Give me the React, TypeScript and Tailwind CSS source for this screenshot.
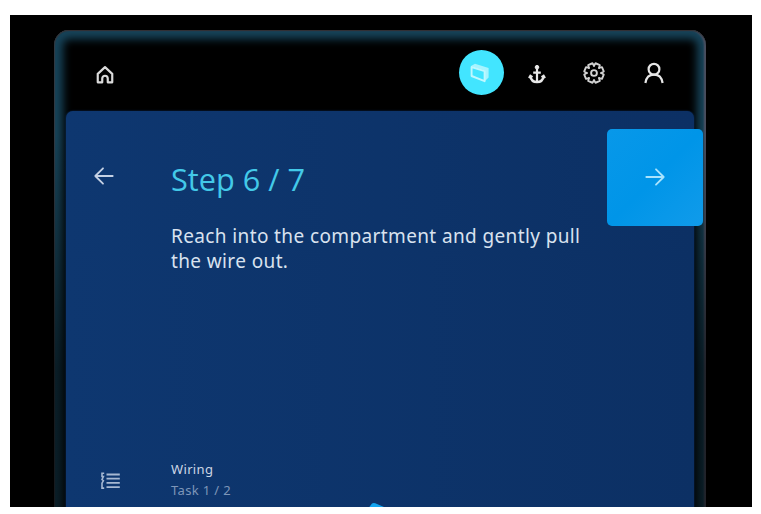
import type { ReactNode } from "react";

function Glyph({ className, children }: { className: string; children: ReactNode }) {
  return (
    <svg
      viewBox="0 0 24 24"
      fill="none"
      stroke="currentColor"
      strokeLinejoin="round"
      className={className}
    >
      {children}
    </svg>
  );
}

function HomeIcon() {
  return (
    <Glyph className="h-[20px] w-[20px] text-[#dadada]">
      <path strokeWidth="2.6" d="M3.3 20.8V10.6L12 2.6l8.7 8V20.8h-5.4v-4.6a3.3 3.3 0 0 0-6.6 0v4.6z" />
    </Glyph>
  );
}

function PanelIcon() {
  return (
    <svg viewBox="0 0 20 20" fill="none" strokeLinejoin="round" className="h-5 w-5">
      <path fill="#a6f4ff" d="M1 3 5 .8 18.6 5v9.6L15 18V7.4z" />
      <path stroke="#c0f8ff" strokeWidth="1.9" fill="#42e5ff" d="M1.6 4 14.6 8.2v10L1.6 13z" />
    </svg>
  );
}

function AnchorIcon() {
  return (
    <svg viewBox="0 0 18 20" fill="none" stroke="#e9e9e9" className="h-5 w-[18px]">
      <circle cx="9" cy="3.2" r="1.8" fill="#e9e9e9" />
      <path strokeWidth="2.2" d="M9 4.8v13M5.2 8.6h7.6" />
      <path strokeWidth="2.4" d="M2.3 12.2c.6 3.6 3.2 5.8 6.7 5.8s6.1-2.2 6.7-5.8" />
      <path strokeWidth="1.6" d="M.8 14 2.3 11.4 4.6 13M17.2 14l-1.5-2.6-2.3 1.6" />
    </svg>
  );
}

function GearIcon() {
  const teeth = [22.5, 67.5, 112.5, 157.5, 202.5, 247.5, 292.5, 337.5];
  return (
    <svg viewBox="-11 -11 22 22" fill="none" stroke="#d2d2d2" strokeWidth="1.9" strokeLinejoin="round" strokeLinecap="round" className="h-[22px] w-[22px]">
      {teeth.map((angle) => (
        <path key={angle} transform={`rotate(${angle})`} d="M-2.75-6.65-2.3-9.6h4.6l.45 2.95" />
      ))}
      <circle r="2.9" />
    </svg>
  );
}

function UserIcon() {
  return (
    <svg viewBox="0 0 20 22" fill="none" stroke="#e6e6e6" strokeWidth="2.2" className="h-[22px] w-5">
      <circle cx="10" cy="7.2" r="5.4" />
      <path d="M1.4 21c.7-5 3.4-8.4 8.6-8.4s7.9 3.4 8.6 8.4" />
    </svg>
  );
}

function ArrowIcon({ back = false }: { back?: boolean }) {
  return (
    <svg
      viewBox="0 0 20 20"
      fill="none"
      stroke={back ? "#c5d1e4" : "#a9e3fd"}
      strokeWidth="1.8"
      strokeLinecap="round"
      strokeLinejoin="round"
      className={back ? "h-5 w-5" : "h-5 w-5 rotate-180"}
    >
      <path d="M18.7 10H1.3m7.7-7.7L1.3 10 9 17.7" />
    </svg>
  );
}

function ListIcon() {
  return (
    <svg viewBox="0 0 20 18" fill="none" stroke="#a6b8d2" className="h-[18px] w-5">
      <path strokeWidth="1.8" d="M5.5 2.5h13.3M5.5 6.7h13.3M5.5 10.9h13.3M5.5 15.2h13.3" />
      <path strokeWidth="1.6" d="M3.2 1.3H1v3.2h1.4L1 7.5l1.4 1.2L1 11.2v4.9h2.2" />
    </svg>
  );
}

export default function App() {
  return (
    <main className="h-[514px] w-[761px] overflow-hidden bg-white pt-[15px] pl-[10px] font-['Noto_Sans','Open_Sans',sans-serif]">
      <div className="h-[492px] w-[742px] overflow-hidden bg-black pt-[15px] pl-[44px]">
        <div className="relative h-[520px] w-[652px] rounded-t-[15px] bg-black px-3 shadow-[inset_0_1px_1px_#332f32,inset_1px_0_1px_#343b43,inset_-2px_0_2px_#515263,inset_0_0_9px_9px_#17445a]">
          <div className="pointer-events-none absolute inset-0 bg-linear-to-b from-transparent from-20% to-black/55 to-65%" />

          <header className="relative flex h-[81px] items-center pt-1 pl-[29px]">
            <div className="pt-1"><HomeIcon /></div>
            <nav className="ml-auto flex items-center pr-[30px]">
              <div className="flex h-[45px] w-[45px] items-center justify-center rounded-full bg-[#42e5ff] pr-1">
                <PanelIcon />
              </div>
              <div className="ml-[24px] pt-0.5"><AnchorIcon /></div>
              <div className="ml-[37px]"><GearIcon /></div>
              <div className="ml-[39px]"><UserIcon /></div>
            </nav>
          </header>

          <section className="relative flex h-[430px] flex-col rounded-t-[7px] bg-[#0d346b] bg-linear-to-r from-[#0e3770] to-[#0c3064] shadow-[0_0_2px_#0c3064]">
            <div className="flex h-[345px]">
              <div className="w-[105px] pt-[55px] pl-[28px]"><ArrowIcon back /></div>
              <div className="pt-[46px]">
                <h1 className="w-max font-['Open_Sans','Noto_Sans',sans-serif] text-[30.7px] leading-[44px] font-normal whitespace-nowrap text-[#43c9e8]">
                  Step 6 / 7
                </h1>
                <p className="mt-[23px] w-max text-[19px] leading-[25px] tracking-[0.38px] whitespace-nowrap text-[#d9e2ef]">
                  Reach into the compartment and gently pull
                  <br />
                  the wire out.
                </p>
              </div>
            </div>
            <footer className="flex">
              <div className="w-[105px] pt-[16px] pl-[35px]"><ListIcon /></div>
              <div className="pt-[3px] text-[13px] leading-[21px] tracking-[0.35px]">
                <p className="text-[#ccd6e5]">Wiring</p>
                <p className="text-[#7e96b9]">Task 1 / 2</p>
              </div>
            </footer>
            <svg viewBox="0 0 24 8" className="absolute top-[391px] left-[301px] h-2 w-6" fill="#12a4ef">
              <path d="M0 8 5 1.5Q7 .5 10 2l14 6z" />
            </svg>
            <button
              aria-label="Next step"
              className="absolute top-[18px] left-[541px] flex h-[97px] w-[96px] items-center justify-center rounded-[5px] bg-linear-to-br from-[#0898e9] via-[#0095e8] to-[#109bea] pb-0.5"
            >
              <ArrowIcon />
            </button>
          </section>
        </div>
      </div>
    </main>
  );
}
